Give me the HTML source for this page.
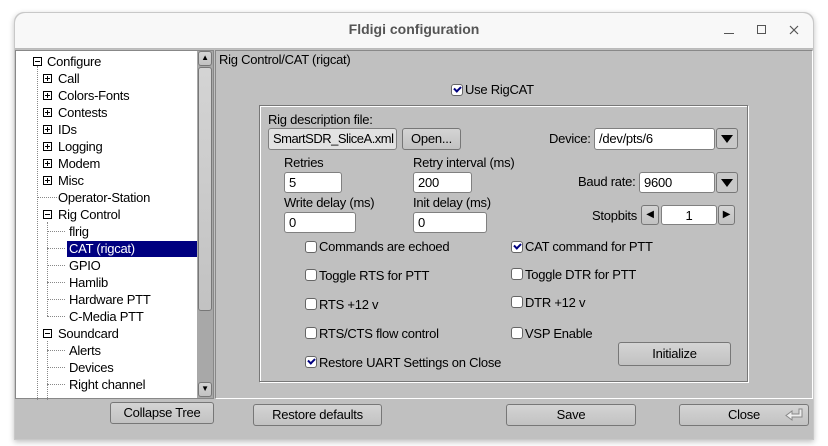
<!DOCTYPE html><html><head><style>
*{margin:0;padding:0;box-sizing:border-box}
body{width:828px;height:446px;background:#fff;font-family:"Liberation Sans","DejaVu Sans",sans-serif;font-size:12.5px;color:#000;position:relative;overflow:hidden;letter-spacing:-0.25px}
.a{position:absolute;white-space:nowrap}
.win{position:absolute;left:14px;top:12px;width:800px;height:428px;border:1px solid #c8c8c8;border-radius:10px 10px 0 0;background:#c0c0c0;box-shadow:0 2px 6px rgba(0,0,0,.25);overflow:hidden}
.in{position:absolute;background:#fff;border:1px solid #808080;border-radius:3px;padding:1px 4px;line-height:18px;overflow:hidden}
.btn{position:absolute;border:1px solid #777;border-radius:3px;text-align:center;line-height:20px;background:linear-gradient(#d4d4d4,#c2c2c2)}
.cb{position:absolute;width:12px;height:12px;border:1px solid #666;border-radius:3px;background:#fff}
.cb.on::after{content:"";position:absolute;left:2px;top:1px;width:5px;height:3px;border-left:2px solid #000080;border-bottom:2px solid #000080;transform:rotate(-45deg)}
.bx{position:absolute;width:9px;height:9px;border:1px solid #000;background:#fff}
.bx::before{content:"";position:absolute;left:1px;top:3px;width:5px;height:1px;background:#000}
.bx.p::after{content:"";position:absolute;left:3px;top:1px;width:1px;height:5px;background:#000}
.dd{position:absolute;width:22px;height:21px;border:1px solid #777;border-radius:3px;background:#c8c8c8}
.dd::after{content:"";position:absolute;left:4px;top:6px;border-left:6px solid transparent;border-right:6px solid transparent;border-top:8px solid #000}
.vl{position:absolute;border-left:1px dotted #888}
.hl{position:absolute;border-top:1px dotted #888}
.t{font-size:13px}
</style></head><body>
<div class="win"></div>
<div class="a" style="left:15px;top:13px;width:798px;height:36px;background:#f8f8f8;border-radius:10px 10px 0 0;border-bottom:1px solid #bbb"></div>
<div class="a" style="left:0;width:828px;top:21px;text-align:center;font-weight:bold;color:#555;font-size:14px;letter-spacing:0">Fldigi configuration</div>
<div class="a" style="left:724px;top:33px;width:10px;height:1px;background:#555"></div>
<div class="a" style="left:757px;top:25px;width:9px;height:9px;border:1px solid #555"></div>
<svg class="a" style="left:789px;top:25px" width="10" height="10"><path d="M1 1L9 9M9 1L1 9" stroke="#555" stroke-width="1.2"/></svg>

<!-- tree -->
<div class="a" style="left:15px;top:50px;width:199px;height:349px;background:#fff;border:1px solid #888"></div>
<div class="vl" style="left:37px;top:66px;height:334px"></div>
<div class="vl" style="left:47px;top:222px;height:94px"></div>
<div class="vl" style="left:47px;top:341px;height:59px"></div>
<div class="hl" style="left:37px;top:197px;width:20px"></div>
<div class="hl" style="left:47px;top:231px;width:18px"></div><div class="hl" style="left:47px;top:248px;width:18px"></div><div class="hl" style="left:47px;top:265px;width:18px"></div><div class="hl" style="left:47px;top:282px;width:18px"></div><div class="hl" style="left:47px;top:299px;width:18px"></div><div class="hl" style="left:47px;top:316px;width:18px"></div><div class="hl" style="left:47px;top:350px;width:18px"></div><div class="hl" style="left:47px;top:367px;width:18px"></div><div class="hl" style="left:47px;top:384px;width:18px"></div>
<div class="bx" style="left:33px;top:57px"></div>
<div class="bx p" style="left:43px;top:74px"></div><div class="bx p" style="left:43px;top:91px"></div><div class="bx p" style="left:43px;top:108px"></div><div class="bx p" style="left:43px;top:125px"></div><div class="bx p" style="left:43px;top:142px"></div><div class="bx p" style="left:43px;top:159px"></div><div class="bx p" style="left:43px;top:176px"></div><div class="bx" style="left:43px;top:210px"></div><div class="bx" style="left:43px;top:329px"></div>
<div class="a" style="left:67px;top:241px;width:130px;height:16px;background:#000080"></div>
<div class="a t" style="left:47px;top:53px;line-height:17px">Configure</div>
<div class="a t" style="left:58px;top:70px;line-height:17px">Call<br>Colors-Fonts<br>Contests<br>IDs<br>Logging<br>Modem<br>Misc<br>Operator-Station<br>Rig Control</div>
<div class="a t" style="left:69px;top:223px;line-height:17px">flrig<br><span style="color:#fff">CAT (rigcat)</span><br>GPIO<br>Hamlib<br>Hardware PTT<br>C-Media PTT</div>
<div class="a t" style="left:58px;top:325px;line-height:17px">Soundcard</div>
<div class="a t" style="left:69px;top:342px;line-height:17px">Alerts<br>Devices<br>Right channel</div>
<!-- scrollbar -->
<div class="a" style="left:197px;top:51px;width:16px;height:347px;background:#a8a8a8"></div>
<div class="btn" style="left:198px;top:51px;width:14px;height:15px;line-height:12px;font-size:8px">▲</div>
<div class="btn" style="left:198px;top:67px;width:14px;height:244px"></div>
<div class="btn" style="left:198px;top:382px;width:14px;height:15px;line-height:12px;font-size:8px">▼</div>

<!-- right panel -->
<div class="a" style="left:215px;top:50px;width:598px;height:349px;border:1px solid #888;border-right-color:#fff;border-bottom-color:#fff"></div>
<div class="a t" style="left:219px;top:52px">Rig Control/CAT (rigcat)</div>
<div class="cb on" style="left:451px;top:84px"></div>
<div class="a t" style="left:465px;top:82px">Use RigCAT</div>
<div class="a" style="left:259px;top:105px;width:489px;height:277px;border:1px solid #777;box-shadow:1px 1px 0 #fff, inset 1px 1px 0 #fff"></div>
<div class="a t" style="left:268px;top:112px">Rig description file:</div>
<div class="in t" style="left:268px;top:128px;width:129px;height:22px;background:#e2e2e2;letter-spacing:-0.5px">SmartSDR_SliceA.xml</div>
<div class="btn t" style="left:402px;top:128px;width:59px;height:22px">Open...</div>
<div class="a t" style="left:549px;top:131px">Device:</div>
<div class="in t" style="left:594px;top:128px;width:121px;height:22px">/dev/pts/6</div>
<div class="dd" style="left:716px;top:128px"></div>
<div class="a t" style="left:284px;top:155px">Retries</div>
<div class="a t" style="left:413px;top:155px">Retry interval (ms)</div>
<div class="in t" style="left:284px;top:172px;width:58px;height:21px">5</div>
<div class="in t" style="left:413px;top:172px;width:59px;height:21px">200</div>
<div class="a t" style="left:578px;top:174px">Baud rate:</div>
<div class="in t" style="left:639px;top:172px;width:76px;height:21px">9600</div>
<div class="dd" style="left:716px;top:172px"></div>
<div class="a t" style="left:284px;top:195px">Write delay (ms)</div>
<div class="a t" style="left:413px;top:195px">Init delay (ms)</div>
<div class="in t" style="left:284px;top:212px;width:72px;height:21px">0</div>
<div class="in t" style="left:413px;top:212px;width:74px;height:21px">0</div>
<div class="a t" style="left:592px;top:208px">Stopbits</div>
<div class="btn" style="left:641px;top:205px;width:18px;height:20px;font-size:10px;line-height:18px">◀</div>
<div class="in t" style="left:661px;top:205px;width:56px;height:20px;text-align:center">1</div>
<div class="btn" style="left:718px;top:205px;width:17px;height:20px;font-size:10px;line-height:18px">▶</div>

<div class="cb" style="left:305px;top:241px"></div><div class="a t" style="left:319px;top:239px">Commands are echoed</div>
<div class="cb" style="left:305px;top:269px"></div><div class="a t" style="left:319px;top:268px">Toggle RTS for PTT</div>
<div class="cb" style="left:305px;top:298px"></div><div class="a t" style="left:319px;top:297px">RTS +12 v</div>
<div class="cb" style="left:305px;top:327px"></div><div class="a t" style="left:319px;top:326px">RTS/CTS flow control</div>
<div class="cb on" style="left:305px;top:356px"></div><div class="a t" style="left:319px;top:355px">Restore UART Settings on Close</div>
<div class="cb on" style="left:511px;top:241px"></div><div class="a t" style="left:525px;top:239px">CAT command for PTT</div>
<div class="cb" style="left:511px;top:268px"></div><div class="a t" style="left:525px;top:267px">Toggle DTR for PTT</div>
<div class="cb" style="left:511px;top:296px"></div><div class="a t" style="left:525px;top:295px">DTR +12 v</div>
<div class="cb" style="left:511px;top:327px"></div><div class="a t" style="left:525px;top:326px">VSP Enable</div>
<div class="btn t" style="left:618px;top:342px;width:113px;height:24px;line-height:22px">Initialize</div>

<div class="btn t" style="left:110px;top:402px;width:104px;height:22px">Collapse Tree</div>
<div class="btn t" style="left:253px;top:404px;width:129px;height:22px">Restore defaults</div>
<div class="btn t" style="left:506px;top:404px;width:130px;height:22px">Save</div>
<div class="btn t" style="left:679px;top:404px;width:130px;height:22px">Close</div>
<svg class="a" style="left:785px;top:408px" width="20" height="14"><path d="M17 1V9H7V12L1 7.5L7 3V6H14V1Z" fill="#eee" stroke="#888" stroke-width="1"/></svg>
</body></html>
